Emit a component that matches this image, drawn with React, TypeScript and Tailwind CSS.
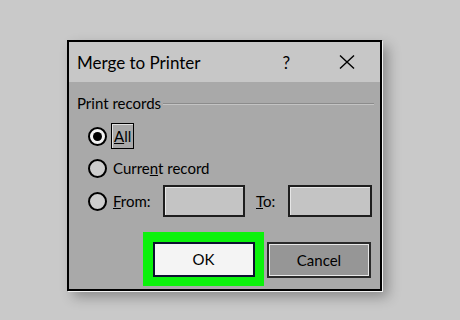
import type { ReactNode } from 'react';

const font = { fontFamily: 'Lato, "Noto Sans", "Liberation Sans", sans-serif' };

function Radio({ checked }: { checked?: boolean }) {
  return (
    <div
      className={`flex h-[19px] w-[19px] shrink-0 items-center justify-center rounded-full border-2 border-black ${
        checked ? 'bg-[#f2f2f2]' : 'bg-[#cdcdcd]'
      }`}
    >
      {checked && <div className="h-[9px] w-[9px] rounded-full bg-black" />}
    </div>
  );
}

function Field() {
  return <div className="h-[32px] border-2 border-[#1e1e1e] bg-[#c4c4c4] shadow-[inset_1px_1px_0_#e6e6e6]" />;
}

function Row({ children, className = '' }: { children: ReactNode; className?: string }) {
  return <div className={`flex items-center pl-[19px] ${className}`}>{children}</div>;
}

export default function App() {
  return (
    <div className="h-[320px] w-[460px] bg-[#c9c9c9] pl-[67px] pt-[40px] text-black" style={font}>
      <div className="flex h-[251px] w-[315px] flex-col border-2 border-black shadow-[1px_1px_0_#f2f2f2,6px_6px_12px_rgba(0,0,0,0.3)]">
        {/* title bar */}
        <div className="flex h-[40px] shrink-0 items-center bg-[#c7c7c7] pl-[8px]">
          <span className="text-[17px] leading-none">Merge to Printer</span>
          <span className="ml-auto mr-[49px] text-[17px] leading-none">?</span>
          <svg width="16" height="14" viewBox="0 0 16 14" className="mr-[25px]">
            <path d="M1 0.5 L15 13.5 M15 0.5 L1 13.5" stroke="#000" strokeWidth="1.4" fill="none" />
          </svg>
        </div>

        {/* body */}
        <div className="flex flex-1 flex-col bg-[#a9a9a9] pt-[11px] text-[15px] leading-none">
          <div className="flex h-[20px] items-center pl-[8px]">
            <span>Print records</span>
            <div className="ml-[2px] mr-[6px] flex-1 border-t border-[#8c8c8c] shadow-[0_1px_0_#c4c4c4]" />
          </div>

          <Row className="mt-[10px] h-[26px]">
            <Radio checked />
            <span className="ml-[4px] flex h-[26px] items-center border border-black px-[2px] shadow-[inset_1px_1px_0_#e0e0e0]">
              <span className="underline">A</span>ll
            </span>
          </Row>

          <Row className="mt-[6px] h-[26px]">
            <Radio />
            <span className="ml-[6px]">
              Curre<span className="underline">n</span>t record
            </span>
          </Row>

          <Row className="mt-[4px] h-[32px]">
            <Radio />
            <span className="ml-[6px] w-[50px]">
              <span className="underline">F</span>rom:
            </span>
            <div className="w-[82px]">
              <Field />
            </div>
            <span className="ml-[11px] w-[32px]">
              <span className="underline">T</span>o:
            </span>
            <div className="w-[84px]">
              <Field />
            </div>
          </Row>

          <div className="mt-[15px] flex items-start pl-[74px]">
            <div className="flex h-[54px] w-[121px] items-center justify-center bg-[#0cf20c]">
              <div className="flex h-[35px] w-[102px] items-center justify-center border-2 border-[#0d1030] bg-[#f4f4f4] text-[15px]">
                OK
              </div>
            </div>
            <div className="ml-[3px] mt-[10px] flex h-[36px] w-[104px] items-center justify-center border-2 border-[#2a2a2a] bg-[#969696] text-[15px] shadow-[inset_1px_1px_0_#e8e8e8,inset_-1px_-1px_0_#e8e8e8]">
              Cancel
            </div>
          </div>
        </div>
      </div>
    </div>
  );
}
